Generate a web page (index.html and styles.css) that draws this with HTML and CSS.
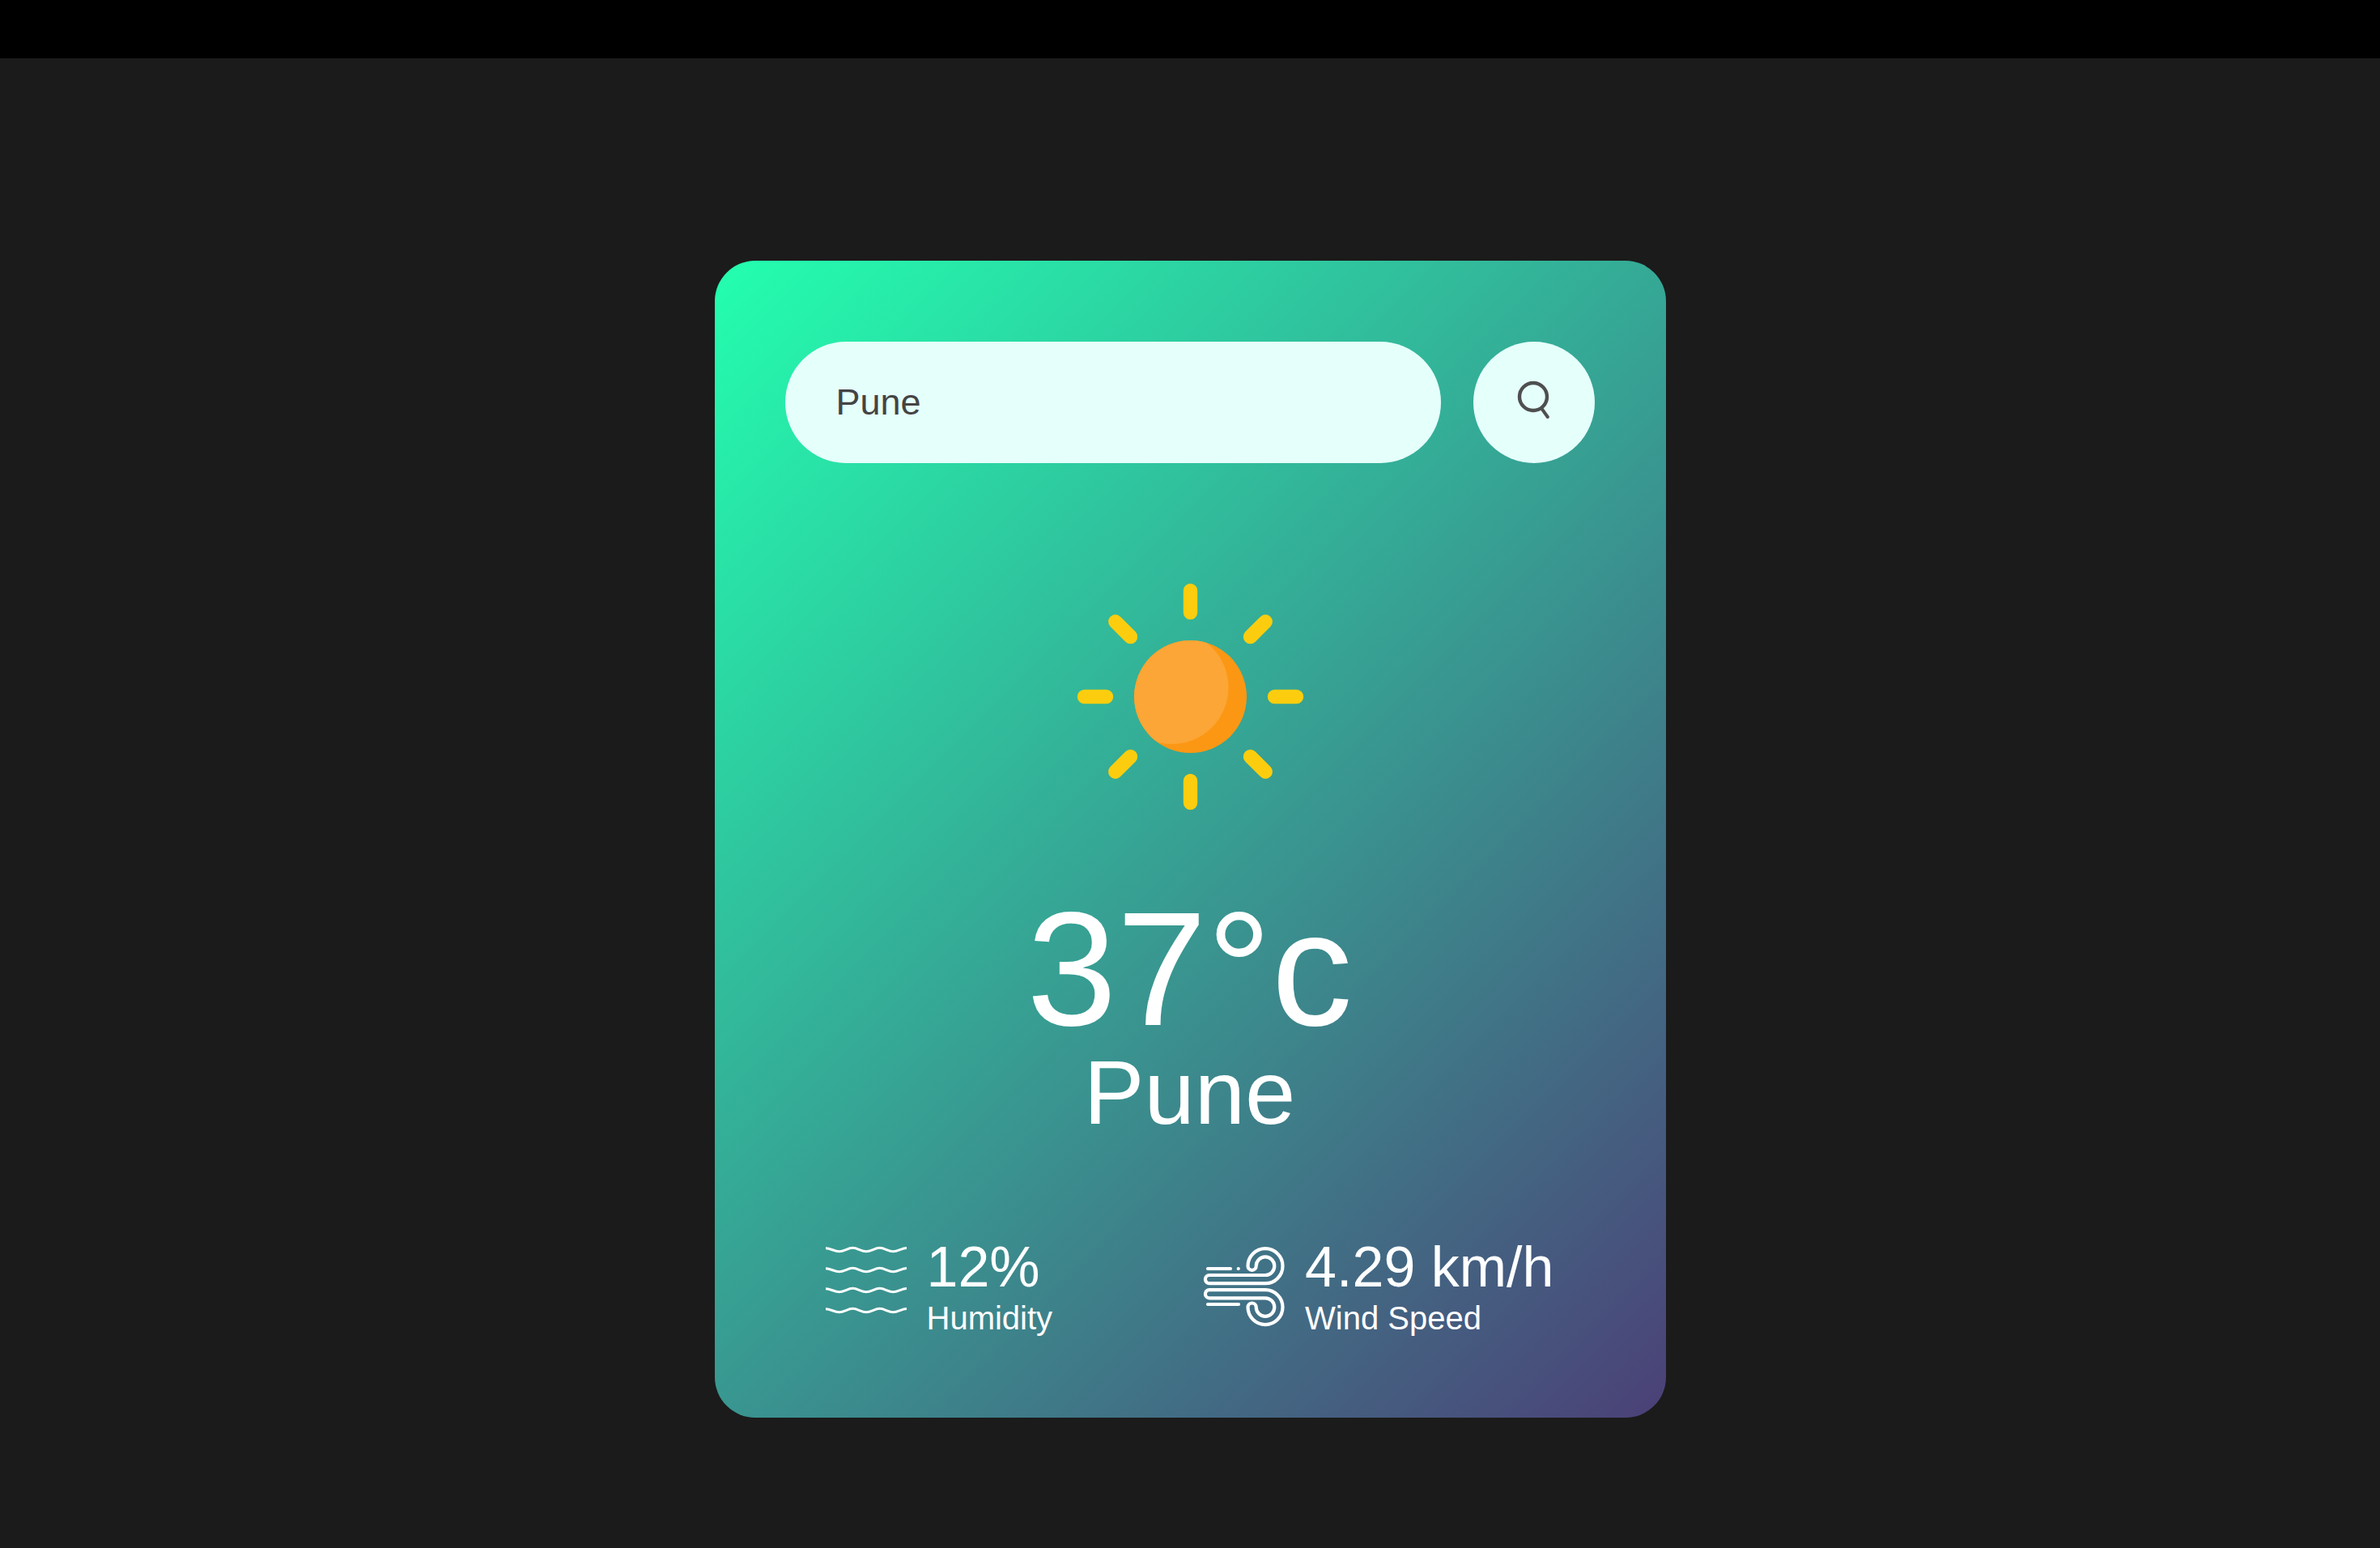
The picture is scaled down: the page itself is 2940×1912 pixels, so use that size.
FILE: index.html
```html
<!DOCTYPE html>
<html lang="en">
<head>
<meta charset="utf-8">
<meta name="viewport" content="width=device-width, initial-scale=1">
<title>Weather</title>
<link rel="stylesheet" href="styles.css">
</head>
<body>
<header class="topbar"></header>
<main class="card">
  <form class="search" onsubmit="return false">
    <input class="search-input" type="text" value="Pune" aria-label="City name" spellcheck="false" autocomplete="off">
    <button class="search-button" type="submit" aria-label="Search">
      <svg class="search-icon" viewBox="0 0 50 50" fill="none" stroke="#4f4f4f" stroke-width="4.4" stroke-linecap="round" aria-hidden="true">
        <circle cx="24" cy="18" r="17"/>
        <path d="M34.3 32.5 41.8 43" stroke-width="4"/>
      </svg>
    </button>
  </form>
  <section class="weather">
    <svg class="weather-icon" viewBox="0 0 425 425" role="img" aria-label="Clear">
      <defs><clipPath id="disc"><circle cx="213.5" cy="213.5" r="69.5"/></clipPath></defs>
      <circle cx="213.5" cy="213.5" r="69.5" fill="#fc9714"/>
      <circle cx="190.5" cy="202" r="70" fill="#fba636" clip-path="url(#disc)"/>
      <g transform="translate(213.5 213.5)" stroke="#fccd0e" stroke-width="17.4" stroke-linecap="round">
        <path d="M0-131V-104M0 131V104M-131 0H-104M131 0H104M-92.7-92.7-74-74M92.7-92.7 74-74M-92.7 92.7-74 74M92.7 92.7 74 74"/>
      </g>
    </svg>
    <h1 class="temp">37°c</h1>
    <h2 class="city">Pune</h2>
  </section>
  <section class="details">
    <div class="detail">
      <svg class="detail-icon" viewBox="0 0 100 100" fill="none" stroke="#fff" stroke-width="3" aria-hidden="true">
        <defs><path id="wave" d="M0 3.7C6 3.7 10.7 7.8 16.7 7.8S27.3 3.3 33.3 3.3 44 7.8 50 7.8 60.7 3.3 66.7 3.3 77.3 7.8 83.3 7.8 94 3.5 100 3.5"/></defs>
        <use href="#wave"/><use href="#wave" y="25"/><use href="#wave" y="50"/><use href="#wave" y="75"/>
      </svg>
      <div>
        <p class="value">12%</p>
        <p class="label">Humidity</p>
      </div>
    </div>
    <div class="detail">
      <svg class="detail-icon" viewBox="0 -1 100 100" fill="none" stroke="#fff" stroke-width="4.2" stroke-linecap="round" aria-hidden="true">
        <defs><path id="gust" d="M7 36H76A11.3 11.3 0 1 0 64.7 24.7A5.1 5.1 0 1 1 54.5 24.7A21.5 21.5 0 1 1 76 46.2H7A5.1 5.1 0 0 1 7 36Z"/></defs>
        <use href="#gust"/>
        <use href="#gust" transform="translate(0 100.3) scale(1 -1)"/>
        <path d="M5 28H33M42.7 28h.1M5 72H43"/>
      </svg>
      <div>
        <p class="value">4.29 km/h</p>
        <p class="label">Wind Speed</p>
      </div>
    </div>
  </section>
</main>
</body>
</html>
```

FILE: styles.css
```css
* {
  box-sizing: border-box;
  margin: 0;
  padding: 0;
  font-family: "Liberation Sans", Arial, Helvetica, sans-serif;
}

body {
  background: #1b1b1b;
}

.topbar {
  height: 72px;
  background: #000;
}

.card {
  width: 90%;
  max-width: 1175px;
  margin: 250px auto 0;
  padding: 100px 88px 100px 87px;
  border-radius: 50px;
  background: linear-gradient(135deg, #23ffaf, #4b4077);
  color: #fff;
  text-align: center;
}

.search {
  display: flex;
  gap: 40px;
}

.search-input {
  flex: 1;
  min-width: 0;
  height: 150px;
  padding: 0 63px;
  border: 0;
  outline: 0;
  border-radius: 75px;
  background: #e5fffb;
  color: #444;
  font-size: 45px;
}

.search-button {
  display: grid;
  place-items: center;
  width: 150px;
  height: 150px;
  border: 0;
  border-radius: 50%;
  background: #e5fffb;
  cursor: pointer;
}

.search-icon {
  width: 50px;
  height: 50px;
  overflow: visible;
}

.weather-icon {
  display: block;
  width: 425px;
  height: 425px;
  margin: 75px auto 25px;
}

.temp {
  font-size: 200px;
  font-weight: 400;
  line-height: 200px;
}

.city {
  font-size: 112px;
  font-weight: 400;
  line-height: 106px;
}

.details {
  display: flex;
  justify-content: space-between;
  margin-top: 122px;
  padding: 0 50px;
}

.detail {
  display: flex;
  align-items: center;
  gap: 25px;
  text-align: left;
}

.detail-icon {
  width: 100px;
  height: 100px;
  overflow: visible;
}

.value {
  font-size: 70px;
  line-height: 80px;
}

.label {
  font-size: 40px;
  line-height: 46px;
}
```
